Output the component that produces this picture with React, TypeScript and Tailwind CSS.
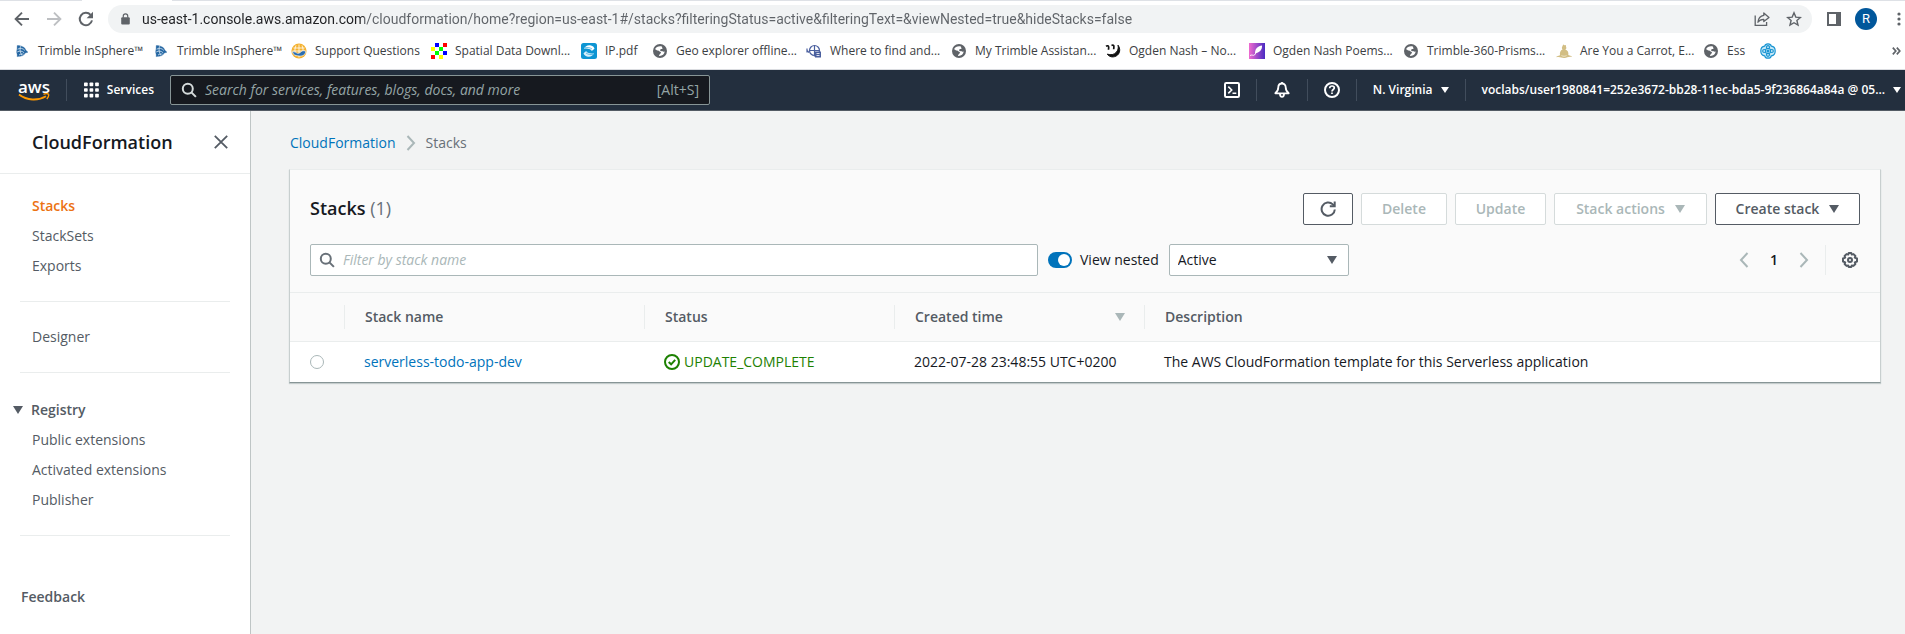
import React, { useState } from 'react';

type IconProps = { className?: string };

const ArrowLeft = ({ className = '' }: IconProps) => (
  <svg viewBox="0 0 16 16" className={`size-4 ${className}`} fill="none" stroke="currentColor" strokeWidth="1.9">
    <path d="M15 8H2.2M8 1.6 1.6 8 8 14.4" />
  </svg>
);

const ChromeReload = () => (
  <svg viewBox="0 0 16 16" className="size-4 text-[#5f6368]" fill="none">
    <path d="M14 9.4A6.2 6.2 0 1 1 12.6 3.9" stroke="currentColor" strokeWidth="2" />
    <path d="M15 .8v6.4H8.6z" fill="currentColor" />
  </svg>
);

const Lock = () => (
  <svg viewBox="0 0 10 14" className="h-3 w-[9px] shrink-0 text-[#5f6368]" fill="none">
    <rect x="0" y="5" width="10" height="8.5" rx="1.2" fill="currentColor" />
    <path d="M2.4 5.6V3.6a2.6 2.6 0 0 1 5.2 0v2" stroke="currentColor" strokeWidth="1.4" />
  </svg>
);

const Share = () => (
  <svg viewBox="0 0 16 16" className="size-4" fill="none" stroke="currentColor" strokeWidth="1.3">
    <path d="M1.2 4.5v9.8h11.4v-3.2" />
    <path d="M9.8 2 15 6.4 9.8 10.6V8.3C7 8.3 5.2 9.2 3.9 11.2 4.3 7.6 6.2 5 9.8 4.4z" strokeLinejoin="round" />
  </svg>
);

const Star = () => (
  <svg viewBox="0 0 16 16" className="size-4" fill="none" stroke="currentColor" strokeWidth="1.4">
    <path d="m8 1.8 1.8 4.3 4.6.4-3.5 3 1.1 4.6L8 11.7l-4 2.4 1.1-4.6-3.5-3 4.6-.4z" />
  </svg>
);

const SidePanel = () => (
  <svg viewBox="0 0 14 14" className="size-3.5 text-[#5f6368]" fill="none">
    <rect x="1" y="1" width="12" height="12" stroke="currentColor" strokeWidth="2" />
    <rect x="9" y="1" width="5" height="12" fill="currentColor" />
  </svg>
);

const Kebab = () => (
  <svg viewBox="0 0 4 14" className="h-3.5 w-1 text-[#5f6368]" fill="currentColor">
    <circle cx="2" cy="2" r="1.6" />
    <circle cx="2" cy="7" r="1.6" />
    <circle cx="2" cy="12" r="1.6" />
  </svg>
);

const Globe = () => (
  <svg viewBox="0 0 16 16" className="size-4">
    <circle cx="8" cy="8" r="7" fill="#5f6368" />
    <path d="M3 6.2c1.2.2 1.7 1.3 3 1.4 1 .1 1.2 1 2.2 1.2 1.1.3.9 1.5 0 2-.8.5-.9 1.3-1.2 2.2 3 .3 5.4-1.7 5.7-4.4-1.3.5-1.5-.5-2.7-.4-1.6.1-2.4-.9-1.6-1.7.7-.7 1.9.1 2.1-.9.2-.8-.7-1-.4-1.9-2.800-1-6 .2-7.100 2.500z" fill="#fff" />
  </svg>
);

const Trimble = () => (
  <svg viewBox="0 0 16 16" className="size-4" fill="none" stroke="#1d5f9c">
    <path d="M3.2 2.500c3.800 0 8 1.600 8.500 4.500L14 9.200l-2.700.8c-1 2.400-3.800 3.600-8.300 3.600C4 11.500 2 10 2.800 7.500 3.300 5.500 3 4 3.200 2.500z" fill="#2567a3" strokeWidth=".3" />
    <path d="M3.500 6.200c3-1.500 5.500-.9 7.300 1.200M3.200 9c2.500-1.500 4.800-1.200 7 .8M5 12c1.500-1 3-1.200 4.500-.8M6.500 3.200C5.500 6 6 9.500 8 12.500" stroke="#d6e6f3" strokeWidth=".8" />
  </svg>
);

const SupportGlobe = () => (
  <svg viewBox="0 0 16 16" className="size-4" fill="none">
    <circle cx="8" cy="8" r="7.600" fill="#f4b12f" />
    <path d="M2.500 5h11M1.500 8h13M8 1.500v13M5 2.500C3.500 6 3.500 9 5 13M11 2.500c1.500 3.500 1.500 6.500 0 10" stroke="#fff" strokeWidth=".8" />
    <path d="M1.200 8.600c1.800.3 3 .2 4.300 1.200C7 11 9 10 10 8.700c1.400-1.200 3.600-1.200 4.800-.2C14 12.300 11.500 13.300 8.200 13 5 13 2 12 1.200 8.600z" fill="#2a6db0" stroke="#fff" strokeWidth=".6" />
  </svg>
);

const Pixels = () => (
  <svg viewBox="0 0 16 16" className="size-4" shapeRendering="crispEdges">
    <rect width="16" height="16" fill="#fff" />
    <path d="M4 0h4v4H4zM12 8h4v4h-4z" fill="#00f" />
    <path d="M12 0h4v4h-4zM0 12h4v4H0z" fill="#f00" />
    <path d="M0 4h4v4H0zM8 12h4v4H8z" fill="#ff0" />
    <path d="M8 4h4v4H8zM4 8h4v4H4z" fill="#0f0" />
  </svg>
);

const BlueSwirl = () => (
  <svg viewBox="0 0 16 16" className="size-4">
    <rect width="16" height="16" rx="2.500" fill="#0d95d3" />
    <path d="M3 5.800C4.200 3 7 1.800 10 2.600c1.800.3 2.900 1.500 3.500 3.200L10.800 8C10.500 6.300 6.500 5 3 5.800z" fill="#fff" />
    <path d="M13 10.200C11.800 13 9 14.200 6 13.400c-1.800-.3-2.900-1.500-3.500-3.200L5.200 8c.3 1.700 4.300 3 7.800 2.200z" fill="#d5eefa" />
    <path d="M4 4.700c2.500-.6 5-.2 7 1.300M12 11.300c-2.500.6-5 .2-7-1.300" stroke="#0d95d3" strokeWidth=".6" fill="none" />
  </svg>
);

const Compass = () => (
  <svg viewBox="0 0 16 16" className="size-4" fill="none" stroke="#4a5f9e" strokeWidth="1.200">
    <circle cx="8.500" cy="7.500" r="5" />
    <path d="M8.500 2.500v11M3 7.500h11M1 5.500v4M1 7.500l2 2" />
    <rect x="9" y="8.500" width="6" height="6" fill="#4a5f9e" stroke="none" />
    <path d="M10.500 10.500h3M10.500 12.500h3" stroke="#fff" strokeWidth=".8" />
  </svg>
);

const Smile = () => (
  <svg viewBox="0 0 16 16" className="size-4" fill="none">
    <path d="M13 2.200c2.700 3.500 2.300 8.700-2 10.900-3.200 1.600-6.800.8-8.700-2 3.500 1.300 6.800.5 8.800-1.600 2-2.200 2.600-4.600 1.900-7.300z" fill="#111" stroke="#111" />
    <path d="M1 3.200c1.400-.9 2.800-.3 2.700 1.200l-.2 2.400M6.500 2.500c1.500-.7 2.500-.2 2.400 1.200l-.2 2.600" stroke="#111" strokeWidth="1.700" />
  </svg>
);

const Quill = () => (
  <svg viewBox="0 0 16 16" className="size-4">
    <defs>
      <linearGradient id="quill" x1="0" x2="1">
        <stop offset="0" stopColor="#f06bd0" />
        <stop offset="1" stopColor="#4a2bc2" />
      </linearGradient>
    </defs>
    <rect width="16" height="16" fill="url(#quill)" />
    <path d="M13 2.500C9 3 6 5.500 6 10.200 10 10 13.500 7 13 2.500z" fill="#fff" />
    <path d="M1 12.500c2.500-1.200 3 .5 4.500-.5L9 7" stroke="#fff" strokeWidth=".9" fill="none" />
  </svg>
);

const Figurine = () => (
  <svg viewBox="0 0 16 16" className="size-4">
    <path d="M6.300 3.500 7.200 1.500 8.500 2.300 9.800 2l.3 2c.6 1 .2 2-.8 2.600 2 .6 3.600 2.400 3 5.400l3.400 1.300v.6C12 13.300 11 15.200 8 15 5 14.800 4 13.300.5 14.200v-.6L4 12.200C3.500 9.500 4.500 7.200 6.500 6.400c-.7-.6-.8-2-.2-2.900z" fill="#d2be84" />
    <path d="M5.500 12.500c1.500 1 3.500 1 5 0" stroke="#f3ecd4" strokeWidth=".8" fill="none" />
  </svg>
);

const Atom = () => (
  <svg viewBox="0 0 16 16" className="size-4" fill="none" stroke="#1894d2" strokeWidth="1.200">
    <path d="M8 .8c1.700 0 3 .9 3.300 2.400C13.500 3.400 15.200 5.500 15.200 8s-1.700 4.600-3.900 4.800C11 14.300 9.700 15.200 8 15.200s-3-.9-3.300-2.400C2.500 12.600.8 10.500.8 8s1.700-4.600 3.900-4.800C5 1.700 6.300.8 8 .8z" fill="#c6e8f7" />
    <circle cx="8" cy="4.200" r="1.500" />
    <circle cx="8" cy="11.800" r="1.500" />
    <circle cx="4.200" cy="8" r="1.500" />
    <circle cx="11.800" cy="8" r="1.500" />
    <path d="m5.300 6.900 1.600-1.600M9.100 5.300l1.600 1.600M10.700 9.100l-1.600 1.600M6.900 10.700 5.300 9.100" />
    <circle cx="8" cy="8" r=".9" fill="#1894d2" />
  </svg>
);

const Caret = ({ className = '' }: IconProps) => (
  <svg viewBox="0 0 10 8" className={`h-2 w-2.5 shrink-0 ${className}`} fill="currentColor">
    <path d="M0 0h10L5 8z" />
  </svg>
);

const NavCaret = () => (
  <svg viewBox="0 0 8 6" className="h-1.5 w-2 shrink-0" fill="currentColor">
    <path d="M0 0h8L4 6z" />
  </svg>
);

const Search = ({ className = '' }: IconProps) => (
  <svg viewBox="0 0 16 16" className={`size-4 shrink-0 ${className}`} fill="none" stroke="currentColor" strokeWidth="2">
    <circle cx="6.800" cy="6.800" r="5" />
    <path d="m10.400 10.400 4.500 4.500" />
  </svg>
);

const Chevron = ({ className = '' }: IconProps) => (
  <svg viewBox="0 0 10 16" className={`h-4 w-2.5 shrink-0 text-[#aab7b8] ${className}`} fill="none" stroke="currentColor" strokeWidth="2">
    <path d="m1.500 1 6.500 7-6.500 7" />
  </svg>
);

const Grid = () => (
  <svg viewBox="0 0 16 16" className="size-4" fill="currentColor">
    {[0, 6, 12].map((x) => [0, 6, 12].map((y) => <rect key={`${x}-${y}`} x={x} y={y} width="4" height="4" rx=".8" />))}
  </svg>
);

const Terminal = () => (
  <svg viewBox="0 0 16 16" className="size-4" fill="none" stroke="currentColor" strokeWidth="2">
    <rect x="1" y="1" width="14" height="14" rx="1.200" />
    <path d="M4.300 4.600 7.700 8l-3.400 3.400M8.500 11.300h3.800" strokeWidth="1.600" />
  </svg>
);

const Bell = () => (
  <svg viewBox="0 0 16 16" className="size-4" fill="none" stroke="currentColor" strokeWidth="1.800" strokeLinejoin="round">
    <path d="M8 1.500c-2.300 0-3.700 1.700-3.700 3.800 0 3-.8 4.300-3 6h13.400c-2.200-1.700-3-3-3-6C11.700 3.200 10.300 1.500 8 1.500zM8 0v1.500" />
    <path d="M6 12c0 1.800.8 2.800 2 2.800s2-1 2-2.800" />
  </svg>
);

const Help = () => (
  <svg viewBox="0 0 16 16" className="size-4" fill="none" stroke="currentColor" strokeWidth="2">
    <circle cx="8" cy="8" r="7" />
    <path d="M5.700 6.300C5.700 4.900 6.700 4 8 4s2.300.8 2.300 2c0 1.500-2.300 1.500-2.300 3.400" strokeWidth="1.700" />
    <path d="M8 10.400v1.700" strokeWidth="1.700" />
  </svg>
);

const Refresh = () => (
  <svg viewBox="0 0 16 16" className="size-4" fill="none" stroke="currentColor" strokeWidth="2">
    <path d="M14.800 8.500A6.600 6.600 0 1 1 12.800 3.400L14.500 5" />
    <path d="M14.700.4V5.300H9.800" />
  </svg>
);

const Gear = () => (
  <svg viewBox="0 0 16 16" className="size-4" fill="none" stroke="currentColor" strokeWidth="2" strokeLinejoin="round">
    <path d="M6.700 1h2.600l.5 1.600 1.700-.5 1.900 1.900-.6 1.600 2.200.9v3l-2.200.9.6 1.600-1.900 1.900-1.700-.5-.5 1.600H6.700l-.5-1.600-1.700.5L2.600 12l.6-1.600L1 9.500v-3l2.200-.9L2.600 4l1.900-1.900 1.700.5z" />
    <circle cx="8" cy="8" r="2" />
  </svg>
);

const CheckCircle = () => (
  <svg viewBox="0 0 16 16" className="size-4 shrink-0" fill="none" stroke="currentColor" strokeWidth="2">
    <circle cx="8" cy="8" r="7" />
    <path d="m4.700 8 2.400 2.300 4.100-4.500" />
  </svg>
);

const Close = () => (
  <svg viewBox="0 0 14 14" className="size-3.5" fill="none" stroke="currentColor" strokeWidth="1.800">
    <path d="m.8.8 12.400 12.400M13.200.8.8 13.200" />
  </svg>
);

const bookmarks: { icon: () => React.ReactElement; label: string; width: string }[] = [
  { icon: Trimble, label: 'Trimble InSphere™', width: 'w-[139px]' },
  { icon: Trimble, label: 'Trimble InSphere™', width: 'w-[138px]' },
  { icon: SupportGlobe, label: 'Support Questions', width: 'w-[140px]' },
  { icon: Pixels, label: 'Spatial Data Downl...', width: 'w-[150px]' },
  { icon: BlueSwirl, label: 'IP.pdf', width: 'w-[71px]' },
  { icon: Globe, label: 'Geo explorer offline...', width: 'w-[154px]' },
  { icon: Compass, label: 'Where to find and...', width: 'w-[145px]' },
  { icon: Globe, label: 'My Trimble Assistan...', width: 'w-[154px]' },
  { icon: Smile, label: 'Ogden Nash – No...', width: 'w-[144px]' },
  { icon: Quill, label: 'Ogden Nash Poems...', width: 'w-[154px]' },
  { icon: Globe, label: 'Trimble-360-Prisms...', width: 'w-[153px]' },
  { icon: Figurine, label: 'Are You a Carrot, E...', width: 'w-[147px]' },
  { icon: Globe, label: 'Ess', width: 'w-[57px]' },
];

function BrowserChrome() {
  const [url, setUrl] = useState(
    'us-east-1.console.aws.amazon.com/cloudformation/home?region=us-east-1#/stacks?filteringStatus=active&filteringText=&viewNested=true&hideStacks=false',
  );
  return (
    <div className="border-b border-[#dadce0] bg-white">
      <div className="flex h-px">
        <div className="w-[82px] bg-[#dee1e6]" />
        <div className="w-[90px]" />
        <div className="flex-1 bg-[#dee1e6]" />
      </div>
      <div className="flex h-9 items-center">
        <div className="flex w-[108px] items-center gap-4 pl-3.5 text-[#5f6368]">
          <button aria-label="Back"><ArrowLeft /></button>
          <button aria-label="Forward" className="text-[#bdbfc2]"><ArrowLeft className="rotate-180" /></button>
          <button aria-label="Reload"><ChromeReload /></button>
        </div>
        <div className="flex h-7 min-w-0 flex-1 items-center rounded-full bg-[#f1f3f4] pl-[13px] pr-2.5 text-[#5f6368]">
          <Lock />
          <input
            aria-label="Address"
            value={url}
            onChange={(e) => setUrl(e.target.value)}
            className="ml-3 min-w-0 flex-1 bg-[linear-gradient(to_right,#202124_222px,#5f6368_222px)] bg-clip-text font-[Roboto,sans-serif] text-sm text-transparent caret-black outline-none"
          />
          <button aria-label="Share" className="mr-4"><Share /></button>
          <button aria-label="Bookmark this page"><Star /></button>
        </div>
        <button aria-label="Side panel" className="ml-[15px]"><SidePanel /></button>
        <button aria-label="Profile" className="ml-3.5 flex size-[22px] items-center justify-center rounded-full bg-[#01579b] font-[Roboto,sans-serif] text-[13px] text-white">R</button>
        <button aria-label="Browser menu" className="ml-5 mr-1"><Kebab /></button>
      </div>
      <nav aria-label="Bookmarks" className="flex h-8 items-center overflow-hidden pb-1 pl-3.5 pr-1 text-xs text-[#3c4043]">
        {bookmarks.map(({ icon: Icon, label, width }, i) => (
          <a key={i} href="#" className={`flex shrink-0 items-center gap-2 whitespace-nowrap ${width}`}>
            <Icon />
            {label}
          </a>
        ))}
        <a href="#" aria-label="Bookmark"><Atom /></a>
        <button aria-label="More bookmarks" className="ml-auto">
          <svg viewBox="0 0 9 8" className="h-2 w-[9px]" fill="none" stroke="#5f6368" strokeWidth="1.700">
            <path d="m.8.600 3 3.400-3 3.400M4.800.6l3 3.400-3 3.400" />
          </svg>
        </button>
      </nav>
    </div>
  );
}

const NavDivider = () => <div className="h-[22px] w-px shrink-0 bg-[#414d5c]" />;

function ConsoleNav() {
  return (
    <header className="flex h-[41px] items-center border-b border-[#545b64] bg-[#232f3e] font-semibold text-white">
      <a href="#" aria-label="AWS home" className="ml-[18px] flex w-8 flex-col items-center">
        <span className="text-[17px] leading-[13px]">aws</span>
        <svg viewBox="0 0 32 8" className="h-2 w-8" fill="none" stroke="#f90">
          <path d="M1 1.500C9 7.600 20 8 28 3.200" strokeWidth="1.900" />
          <path d="M25.500 1.300c2-.9 4.500-.8 5 0 .4.900-.4 3.200-1.700 4.700" strokeWidth="1.400" />
        </svg>
      </a>
      <div className="ml-4"><NavDivider /></div>
      <button className="ml-[17px] flex w-[70px] items-center gap-2 text-xs"><Grid />Services</button>
      <label className="ml-4 flex h-[30px] w-[540px] items-center gap-2 rounded-xs border border-[#879596] bg-[#16191f] px-2.5 font-normal">
        <Search className="text-[#d5dbdb]" />
        <input aria-label="Search" placeholder="Search for services, features, blogs, docs, and more" className="min-w-0 flex-1 text-sm italic outline-none placeholder:text-[#95a5a6]" />
        <span className="text-sm text-[#95a5a6]">[Alt+S]</span>
      </label>
      <div className="ml-auto flex items-center">
        <button aria-label="CloudShell" className="px-4"><Terminal /></button>
        <NavDivider />
        <button aria-label="Notifications" className="px-[17px]"><Bell /></button>
        <NavDivider />
        <button aria-label="Support" className="px-4"><Help /></button>
        <NavDivider />
        <button className="flex items-center gap-2 px-4 text-xs">N. Virginia <NavCaret /></button>
        <NavDivider />
        <button className="flex items-center gap-2 pl-4 pr-1 text-xs">
          voclabs/user1980841=252e3672-bb28-11ec-bda5-9f236864a84a @ 05... <NavCaret />
        </button>
      </div>
    </header>
  );
}

const SideLink = ({ children, active = false }: { children: React.ReactNode; active?: boolean }) => (
  <li>
    <a href="#" className={`block leading-[30px] ${active ? 'font-semibold text-[#ec7211]' : ''}`}>{children}</a>
  </li>
);

const SideDivider = () => <hr className="mx-5 border-[#eaeded]" />;

function Sidebar() {
  return (
    <aside className="w-[251px] shrink-0 border-r border-[#bfc5c5] bg-white text-sm text-[#545b64]">
      <div className="flex h-[63px] items-center justify-between border-b border-[#eaeded] pl-8 pr-[22px]">
        <h2 className="text-lg font-semibold text-[#16191f]">CloudFormation</h2>
        <button aria-label="Close navigation"><Close /></button>
      </div>
      <nav aria-label="CloudFormation">
        <ul className="px-8 pb-5 pt-[17px]">
          <SideLink active>Stacks</SideLink>
          <SideLink>StackSets</SideLink>
          <SideLink>Exports</SideLink>
        </ul>
        <SideDivider />
        <ul className="px-8 py-5">
          <SideLink>Designer</SideLink>
        </ul>
        <SideDivider />
        <button className="ml-[13px] mt-[22px] flex h-[30px] items-center gap-2 font-semibold"><Caret />Registry</button>
        <ul className="px-8 pb-5">
          <SideLink>Public extensions</SideLink>
          <SideLink>Activated extensions</SideLink>
          <SideLink>Publisher</SideLink>
        </ul>
        <SideDivider />
        <a href="#" className="ml-[21px] mt-[46px] block font-semibold leading-[30px]">Feedback</a>
      </nav>
    </aside>
  );
}

const ActionButton = ({ children, label, disabled = false, width }: { children: React.ReactNode; label?: string; disabled?: boolean; width: string }) => (
  <button
    aria-label={label}
    disabled={disabled}
    className={`flex h-8 shrink-0 items-center justify-center gap-2.5 rounded-xs border bg-white text-sm font-semibold ${width} ${
      disabled ? 'border-[#d5dbdb] text-[#aab7b8]' : 'border-[#545b64] text-[#545b64]'
    }`}
  >
    {children}
  </button>
);

const HeaderCell = ({ children }: { children: React.ReactNode }) => (
  <th scope="col" className="h-[49px] p-0 text-left font-semibold">
    <div className="flex h-6 items-center justify-between border-l border-[#eaeded] pl-5 pr-[19px]">{children}</div>
  </th>
);

function StacksPanel() {
  const [nested, setNested] = useState(true);
  const [selected, setSelected] = useState(false);
  return (
    <section className="border border-[#c8cfcf] border-b-[#879596] border-t-[#eaeded] bg-[#fafafa] text-sm shadow-[0_1px_1px_#c5cccc]">
      <div className="flex items-center justify-between px-5 pt-[23px]">
        <h1 className="pb-0.5 text-lg font-semibold text-[#16191f]">
          Stacks <span className="font-normal text-[#687078]">(1)</span>
        </h1>
        <div className="flex gap-2">
          <ActionButton label="Refresh" width="w-[50px]"><Refresh /></ActionButton>
          <ActionButton disabled width="w-[86px]">Delete</ActionButton>
          <ActionButton disabled width="w-[91px]">Update</ActionButton>
          <ActionButton disabled width="w-[153px]">Stack actions <Caret /></ActionButton>
          <ActionButton width="w-[145px]">Create stack <Caret /></ActionButton>
        </div>
      </div>
      <div className="flex items-center px-5 pb-4 pt-[19px]">
        <label className="flex h-8 w-[728px] items-center gap-2 rounded-xs border border-[#aab7b8] bg-white px-2">
          <Search className="text-[#687078]" />
          <input aria-label="Filter by stack name" placeholder="Filter by stack name" className="min-w-0 flex-1 italic outline-none placeholder:text-[#aab7b8]" />
        </label>
        <label className="ml-2.5 flex items-center gap-2 whitespace-nowrap text-[#16191f]">
          <input
            type="checkbox"
            role="switch"
            checked={nested}
            onChange={(e) => setNested(e.target.checked)}
            className="flex h-4 w-6 appearance-none items-center rounded-full bg-[#879596] px-0.5 before:size-3 before:rounded-full before:bg-white checked:justify-end checked:bg-[#0073bb]"
          />
          View nested
        </label>
        <div className="relative ml-2.5 w-[180px]">
          <select aria-label="Filter status" className="h-8 w-full appearance-none rounded-xs border border-[#aab7b8] bg-white px-2 text-[#16191f]">
            <option>Active</option>
          </select>
          <Caret className="pointer-events-none absolute right-3 top-3 text-[#545b64]" />
        </div>
        <div className="ml-auto flex items-center">
          <button aria-label="Previous page" disabled><Chevron className="rotate-180" /></button>
          <button aria-current="page" className="w-[50px] font-semibold text-[#16191f]">1</button>
          <button aria-label="Next page" disabled><Chevron /></button>
          <div className="ml-4 h-[30px] w-px bg-[#eaeded]" />
          <button aria-label="Preferences" className="ml-4 mr-0.5 text-[#545b64]"><Gear /></button>
        </div>
      </div>
      <table className="w-full table-fixed border-t border-[#eaeded] text-[#545b64]">
        <colgroup>
          <col className="w-[54px]" />
          <col className="w-[300px]" />
          <col className="w-[250px]" />
          <col className="w-[250px]" />
          <col />
        </colgroup>
        <thead>
          <tr className="border-b border-[#eaeded]">
            <td />
            <HeaderCell>Stack name</HeaderCell>
            <HeaderCell>Status</HeaderCell>
            <HeaderCell>Created time <Caret className="text-[#aab7b8]" /></HeaderCell>
            <HeaderCell>Description</HeaderCell>
          </tr>
        </thead>
        <tbody>
          <tr className="h-10 bg-white text-[#16191f]">
            <td className="pl-5">
              <input
                type="radio"
                name="stack"
                aria-label="serverless-todo-app-dev"
                checked={selected}
                onChange={() => setSelected(true)}
                className="block size-3.5 appearance-none rounded-full border border-[#aab7b8] bg-white checked:border-4 checked:border-[#0073bb]"
              />
            </td>
            <td className="pl-5"><a href="#" className="text-[#0073bb]">serverless-todo-app-dev</a></td>
            <td className="pl-5">
              <span className="flex items-center gap-1 text-[#1d8102]"><CheckCircle />UPDATE_COMPLETE</span>
            </td>
            <td className="whitespace-nowrap pl-5">2022-07-28 23:48:55 UTC+0200</td>
            <td className="whitespace-nowrap pl-5">The AWS CloudFormation template for this Serverless application</td>
          </tr>
        </tbody>
      </table>
    </section>
  );
}

export default function App() {
  return (
    <div className="flex min-h-screen flex-col bg-[#f2f3f3] font-['Open_Sans','Noto_Sans',sans-serif]">
      <BrowserChrome />
      <ConsoleNav />
      <div className="flex flex-1">
        <Sidebar />
        <main className="min-w-0 flex-1 pl-[38px] pr-6">
          <nav aria-label="Breadcrumb" className="flex h-[58px] items-center gap-2.5 pl-px pt-1.5 text-sm text-[#687078]">
            <a href="#" className="text-[#0073bb]">CloudFormation</a>
            <Chevron />
            <span>Stacks</span>
          </nav>
          <StacksPanel />
        </main>
      </div>
    </div>
  );
}
